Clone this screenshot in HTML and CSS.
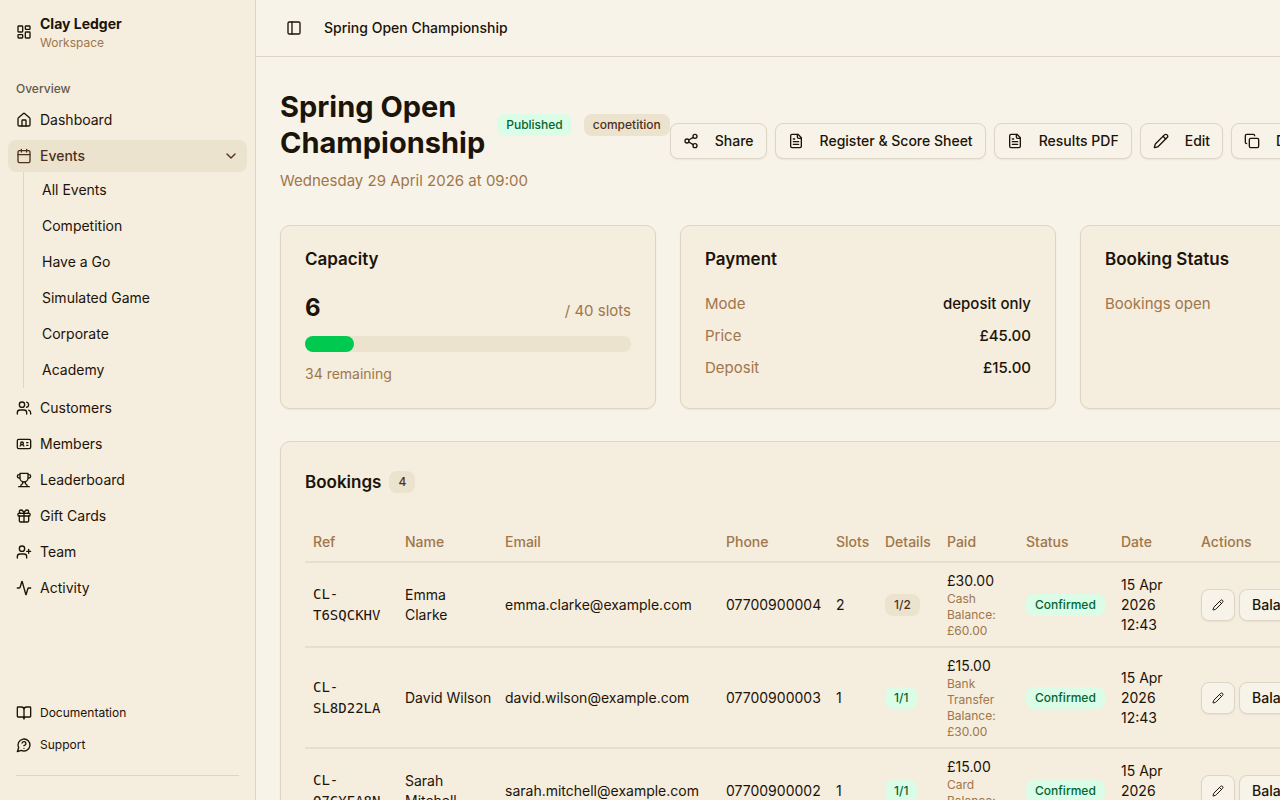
FILE: index.html
```html
<!DOCTYPE html>
<html lang="en">
<head>
<meta charset="utf-8">
<title>Spring Open Championship - Clay Ledger</title>
<meta name="viewport" content="width=device-width, initial-scale=1">
<link rel="stylesheet" href="styles.css">
</head>
<body>
<svg class="sprite" aria-hidden="true">
  <symbol id="i-doc" viewBox="0 0 24 24"><path d="M15 2H6a2 2 0 0 0-2 2v16a2 2 0 0 0 2 2h12a2 2 0 0 0 2-2V7Z"/><path d="M14 2v4a2 2 0 0 0 2 2h4M10 9H8M16 13H8M16 17H8"/></symbol>
  <symbol id="i-pencil" viewBox="0 0 24 24"><path d="M21.174 6.812a1 1 0 0 0-3.986-3.987L3.842 16.174a2 2 0 0 0-.5.83l-1.321 4.352a.5.5 0 0 0 .623.622l4.353-1.32a2 2 0 0 0 .83-.497z"/><path d="m15 5 4 4"/></symbol>
</svg>
<div class="app">
  <aside class="sidebar">
    <a class="brand" href="#">
      <svg class="icon" viewBox="0 0 24 24"><rect width="7" height="9" x="3" y="3" rx="1"/><rect width="7" height="5" x="14" y="3" rx="1"/><rect width="7" height="9" x="14" y="12" rx="1"/><rect width="7" height="5" x="3" y="16" rx="1"/></svg>
      <span class="brand-text"><strong>Clay Ledger</strong><small>Workspace</small></span>
    </a>
    <nav class="nav" aria-label="Overview">
      <p class="nav-label">Overview</p>
      <a class="nav-item" href="#"><svg class="icon" viewBox="0 0 24 24"><path d="M15 21v-8a1 1 0 0 0-1-1h-4a1 1 0 0 0-1 1v8"/><path d="M3 10a2 2 0 0 1 .709-1.528l7-5.999a2 2 0 0 1 2.582 0l7 5.999A2 2 0 0 1 21 10v9a2 2 0 0 1-2 2H5a2 2 0 0 1-2-2z"/></svg>Dashboard</a>
      <div>
        <button class="nav-item active" type="button" aria-expanded="true"><svg class="icon" viewBox="0 0 24 24"><path d="M8 2v4M16 2v4M3 10h18"/><rect width="18" height="18" x="3" y="4" rx="2"/></svg><span class="grow">Events</span><svg class="icon" viewBox="0 0 24 24"><path d="m6 9 6 6 6-6"/></svg></button>
        <div class="subnav">
          <a href="#">All Events</a>
          <a href="#">Competition</a>
          <a href="#">Have a Go</a>
          <a href="#">Simulated Game</a>
          <a href="#">Corporate</a>
          <a href="#">Academy</a>
        </div>
      </div>
      <a class="nav-item" href="#"><svg class="icon" viewBox="0 0 24 24"><path d="M16 21v-2a4 4 0 0 0-4-4H6a4 4 0 0 0-4 4v2"/><circle cx="9" cy="7" r="4"/><path d="M22 21v-2a4 4 0 0 0-3-3.87M16 3.13a4 4 0 0 1 0 7.75"/></svg>Customers</a>
      <a class="nav-item" href="#"><svg class="icon" viewBox="0 0 24 24"><path d="M16 10h2M16 14h2M6.17 15a3 3 0 0 1 5.66 0"/><circle cx="9" cy="11" r="2"/><rect x="2" y="5" width="20" height="14" rx="2"/></svg>Members</a>
      <a class="nav-item" href="#"><svg class="icon" viewBox="0 0 24 24"><path d="M6 9H4.5a2.5 2.5 0 0 1 0-5H6M18 9h1.500a2.500 2.500 0 0 0 0-5H18M4 22h16M10 14.660V17c0 .55-.47.98-.97 1.210C7.850 18.750 7 20.240 7 22M14 14.660V17c0 .55.47.98.97 1.210C16.150 18.750 17 20.240 17 22M18 2H6v7a6 6 0 0 0 12 0V2Z"/></svg>Leaderboard</a>
      <a class="nav-item" href="#"><svg class="icon" viewBox="0 0 24 24"><rect x="3" y="8" width="18" height="4" rx="1"/><path d="M12 8v13M19 12v7a2 2 0 0 1-2 2H7a2 2 0 0 1-2-2v-7M7.500 8a2.500 2.500 0 0 1 0-5A4.800 8 0 0 1 12 8a4.800 8 0 0 1 4.500-5 2.500 2.500 0 0 1 0 5"/></svg>Gift Cards</a>
      <a class="nav-item" href="#"><svg class="icon" viewBox="0 0 24 24"><path d="M16 21v-2a4 4 0 0 0-4-4H6a4 4 0 0 0-4 4v2"/><circle cx="9" cy="7" r="4"/><path d="M19 8v6M22 11h-6"/></svg>Team</a>
      <a class="nav-item" href="#"><svg class="icon" viewBox="0 0 24 24"><path d="M22 12h-2.480a2 2 0 0 0-1.930 1.460l-2.350 8.360a.25.25 0 0 1-.48 0L9.240 2.180a.25.25 0 0 0-.48 0l-2.350 8.360A2 2 0 0 1 4.490 12H2"/></svg>Activity</a>
    </nav>
    <nav class="help" aria-label="Help">
      <a href="#"><svg class="icon" viewBox="0 0 24 24"><path d="M12 7v14M3 18a1 1 0 0 1-1-1V4a1 1 0 0 1 1-1h5a4 4 0 0 1 4 4 4 4 0 0 1 4-4h5a1 1 0 0 1 1 1v13a1 1 0 0 1-1 1h-6a3 3 0 0 0-3 3 3 3 0 0 0-3-3z"/></svg>Documentation</a>
      <a href="#"><svg class="icon" viewBox="0 0 24 24"><path d="M7.900 20A9 9 0 1 0 4 16.100L2 22Z"/><path d="M9.090 9a3 3 0 0 1 5.830 1c0 2-3 3-3 3M12 17h.01"/></svg>Support</a>
    </nav>
    <div class="sidebar-foot"></div>
  </aside>

  <div class="page">
    <header class="topbar">
      <button class="toggle" type="button" aria-label="Toggle sidebar"><svg class="icon" viewBox="0 0 24 24"><rect width="18" height="18" x="3" y="3" rx="2"/><path d="M9 3v18"/></svg></button>
      <span>Spring Open Championship</span>
    </header>
    <main class="main">
      <section class="event-head">
        <div>
          <div class="title-row">
            <h1>Spring Open Championship</h1>
            <span class="badge green">Published</span>
            <span class="badge">competition</span>
          </div>
          <p class="when">Wednesday 29 April 2026 at 09:00</p>
        </div>
        <div class="actions">
          <button class="btn" type="button"><svg class="icon" viewBox="0 0 24 24"><circle cx="18" cy="5" r="3"/><circle cx="6" cy="12" r="3"/><circle cx="18" cy="19" r="3"/><path d="m8.590 13.510 6.830 3.980M15.410 6.510l-6.820 3.980"/></svg>Share</button>
          <button class="btn" type="button"><svg class="icon"><use href="#i-doc"/></svg>Register &amp; Score Sheet</button>
          <button class="btn" type="button"><svg class="icon"><use href="#i-doc"/></svg>Results PDF</button>
          <button class="btn" type="button"><svg class="icon"><use href="#i-pencil"/></svg>Edit</button>
          <button class="btn" type="button"><svg class="icon" viewBox="0 0 24 24"><rect width="14" height="14" x="8" y="8" rx="2"/><path d="M4 16c-1.100 0-2-.9-2-2V4c0-1.100.9-2 2-2h10c1.100 0 2 .9 2 2"/></svg>Duplicate</button>
          <button class="btn" type="button"><svg class="icon" viewBox="0 0 24 24"><path d="M3 6h18M19 6v14a2 2 0 0 1-2 2H7a2 2 0 0 1-2-2V6M8 6V4a2 2 0 0 1 2-2h4a2 2 0 0 1 2 2v2"/></svg>Delete</button>
        </div>
      </section>

      <section class="cards">
        <article class="card">
          <h2>Capacity</h2>
          <div class="capacity">
            <div class="capacity-row"><strong>6</strong><span class="muted">/ 40 slots</span></div>
            <div class="bar"><div class="bar-fill" style="width: 15%"></div></div>
            <p class="remaining">34 remaining</p>
          </div>
        </article>
        <article class="card">
          <h2>Payment</h2>
          <dl class="facts">
            <div><dt>Mode</dt><dd>deposit only</dd></div>
            <div><dt>Price</dt><dd>£45.00</dd></div>
            <div><dt>Deposit</dt><dd>£15.00</dd></div>
          </dl>
        </article>
        <article class="card">
          <h2>Booking Status</h2>
          <p class="muted">Bookings open</p>
        </article>
      </section>

      <section class="card bookings">
        <div class="bookings-head"><h2>Bookings</h2><span class="badge">4</span></div>
        <table>
          <colgroup><col class="c-ref"><col class="c-name"><col class="c-email"><col class="c-phone"><col class="c-slots"><col class="c-details"><col class="c-paid"><col class="c-status"><col class="c-date"><col></colgroup>
          <thead><tr><th>Ref</th><th>Name</th><th>Email</th><th>Phone</th><th>Slots</th><th>Details</th><th>Paid</th><th>Status</th><th>Date</th><th>Actions</th></tr></thead>
          <tbody>
            <tr>
              <td class="ref">CL-<wbr>T6SQCKHV</td><td>Emma Clarke</td><td>emma.clarke@example.com</td><td>07700900004</td><td>2</td><td><span class="badge">1/2</span></td>
              <td>£30.00<small>Cash</small><small>Balance: £60.00</small></td><td><span class="badge green">Confirmed</span></td><td>15 Apr 2026 12:43</td>
              <td><div class="row-actions"><button class="btn small icon-only" type="button" aria-label="Edit booking"><svg class="icon"><use href="#i-pencil"/></svg></button><button class="btn small" type="button">Balance</button></div></td>
            </tr>
            <tr>
              <td class="ref">CL-<wbr>SL8D22LA</td><td class="nowrap">David Wilson</td><td>david.wilson@example.com</td><td>07700900003</td><td>1</td><td><span class="badge green">1/1</span></td>
              <td>£15.00<small>Bank Transfer</small><small>Balance: £30.00</small></td><td><span class="badge green">Confirmed</span></td><td>15 Apr 2026 12:43</td>
              <td><div class="row-actions"><button class="btn small icon-only" type="button" aria-label="Edit booking"><svg class="icon"><use href="#i-pencil"/></svg></button><button class="btn small" type="button">Balance</button></div></td>
            </tr>
            <tr>
              <td class="ref">CL-<wbr>Q7CYEA8N</td><td>Sarah Mitchell</td><td>sarah.mitchell@example.com</td><td>07700900002</td><td>1</td><td><span class="badge green">1/1</span></td>
              <td>£15.00<small>Card</small><small>Balance: £30.00</small></td><td><span class="badge green">Confirmed</span></td><td>15 Apr 2026 12:43</td>
              <td><div class="row-actions"><button class="btn small icon-only" type="button" aria-label="Edit booking"><svg class="icon"><use href="#i-pencil"/></svg></button><button class="btn small" type="button">Balance</button></div></td>
            </tr>
          </tbody>
        </table>
      </section>
    </main>
  </div>
</div>
</body>
</html>
```
FILE: styles.css
```css
:root {
  --bg: #f7f3e8;
  --surface: #f5eddd;
  --accent: #ece3cf;
  --border: #ddd5c5;
  --line: #e7dfce;
  --text: #1c1309;
  --brown: #4f301c;
  --muted: #a0764b;
}

* {
  box-sizing: border-box;
}

body {
  margin: 0;
  overflow: hidden;
  background: var(--bg);
  color: var(--text);
  font-family: Inter, "Liberation Sans", sans-serif;
  font-size: 15px;
  line-height: 24px;
}

h1, h2, p, dl, dd {
  margin: 0;
}

a {
  color: inherit;
  text-decoration: none;
}

button {
  font: inherit;
  color: inherit;
}

.sprite {
  display: none;
}

.icon {
  flex: none;
  width: 16px;
  height: 16px;
  fill: none;
  stroke: currentColor;
  stroke-width: 2;
  stroke-linecap: round;
  stroke-linejoin: round;
}

.app {
  display: flex;
  height: 100vh;
}

.sidebar {
  display: flex;
  flex-direction: column;
  flex: none;
  width: 256px;
  border-right: 1px solid var(--border);
  background: var(--surface);
  font-size: 14px;
  line-height: 20px;
}

.brand {
  display: flex;
  align-items: center;
  gap: 8px;
  height: 64px;
  padding: 0 16px;
}

.brand-text {
  display: flex;
  flex-direction: column;
}

.brand-text strong {
  line-height: 22px;
  font-weight: 700;
}

.brand-text small {
  font-size: 12px;
  line-height: 16px;
  color: var(--muted);
}

.nav {
  display: flex;
  flex: 1;
  flex-direction: column;
  gap: 4px;
  padding: 8px;
}

.nav-label {
  margin-bottom: -4px;
  padding: 8px 8px 6px;
  font-size: 12px;
  line-height: 18px;
  font-weight: 500;
  color: #635a4e;
}

.nav-item {
  display: flex;
  align-items: center;
  gap: 8px;
  width: 100%;
  height: 32px;
  padding: 0 8px;
  border: 0;
  border-radius: 8px;
  background: none;
  text-align: left;
}

.nav-item.active {
  background: var(--accent);
  color: var(--brown);
  font-weight: 500;
}

.grow {
  flex: 1;
}

.subnav {
  display: flex;
  flex-direction: column;
  margin-left: 15px;
  padding-left: 18px;
  border-left: 1px solid var(--border);
}

.subnav a {
  padding: 8px 0;
}

.help {
  display: flex;
  flex-direction: column;
  padding: 0 16px;
  font-size: 12px;
}

.help a {
  display: flex;
  align-items: center;
  gap: 8px;
  height: 32px;
}

.sidebar-foot {
  height: 25px;
  margin: 14px 16px 0;
  border-top: 1px solid var(--border);
}

.page {
  flex: 1;
}

.topbar {
  display: flex;
  align-items: center;
  gap: 16px;
  height: 57px;
  padding: 0 24px;
  border-bottom: 1px solid var(--border);
  font-size: 14px;
  font-weight: 500;
}

.toggle {
  display: flex;
  align-items: center;
  justify-content: center;
  width: 28px;
  height: 28px;
  padding: 0;
  border: 0;
  background: none;
}

.main {
  display: grid;
  gap: 32px;
  padding: 32px 24px;
}

/* The table sets the width of the page; the heading wraps inside it. */
.event-head {
  display: flex;
  align-items: center;
  justify-content: space-between;
  width: 0;
  min-width: 100%;
}

.title-row {
  display: flex;
  align-items: center;
  gap: 12px;
}

h1 {
  font-size: 29px;
  line-height: 36px;
  font-weight: 700;
}

.when {
  margin-top: 8px;
  color: var(--muted);
}

.badge {
  display: inline-block;
  padding: 3px 9px;
  border-radius: 8px;
  background: var(--accent);
  color: var(--brown);
  font-size: 12px;
  line-height: 16px;
  font-weight: 500;
  white-space: nowrap;
}

.badge.green {
  background: #dbfce7;
  color: #016630;
}

.actions {
  display: flex;
  flex: none;
  gap: 8px;
}

.btn {
  display: flex;
  align-items: center;
  gap: 16px;
  height: 36px;
  padding: 0 12px;
  border: 1px solid var(--border);
  border-radius: 8px;
  background: var(--bg);
  box-shadow: 0 1px 2px rgba(0, 0, 0, 0.06);
  font-size: 14px;
  line-height: 20px;
  font-weight: 500;
  white-space: nowrap;
}

.cards {
  display: grid;
  grid-template-columns: repeat(3, 1fr);
  gap: 24px;
}

.card {
  padding: 24px;
  border: 1px solid var(--border);
  border-radius: 10px;
  background: var(--surface);
  box-shadow: 0 1px 2px rgba(0, 0, 0, 0.06);
}

h2 {
  font-size: 17px;
  line-height: 18px;
  font-weight: 600;
}

.cards h2 {
  margin-bottom: 24px;
}

.muted {
  color: var(--muted);
}

.capacity {
  display: grid;
  gap: 12px;
}

.capacity-row {
  display: flex;
  align-items: baseline;
  justify-content: space-between;
  height: 32px;
}

.capacity-row strong {
  font-size: 24px;
  line-height: 32px;
}

.bar {
  height: 16px;
  border-radius: 8px;
  background: var(--accent);
}

.bar-fill {
  height: 100%;
  border-radius: 8px;
  background: #00c950;
}

.remaining {
  font-size: 14px;
  line-height: 20px;
  color: var(--muted);
}

.facts {
  display: grid;
  gap: 8px;
}

.facts div {
  display: flex;
  justify-content: space-between;
}

.facts dt {
  color: var(--muted);
}

.facts dd {
  font-weight: 500;
}

.bookings-head {
  display: flex;
  align-items: center;
  gap: 8px;
  height: 32px;
  margin-bottom: 24px;
}

table {
  width: 100%;
  min-width: 1126px;
  table-layout: fixed;
  border-spacing: 0;
  font-size: 14px;
  line-height: 20px;
}

th, td {
  padding: 8px 8px 7px;
  border-bottom: 2px solid var(--line);
  text-align: left;
  vertical-align: middle;
}

th {
  padding: 10px 8px 9px;
  font-weight: 500;
  color: var(--muted);
}

.c-ref { width: 92px; }
.c-name { width: 100px; }
.c-email { width: 221px; }
.c-phone { width: 110px; }
.c-slots { width: 49px; }
.c-details { width: 62px; }
.c-paid { width: 79px; }
.c-status { width: 95px; }
.c-date { width: 80px; }

.ref {
  font-family: "DejaVu Sans Mono", "Liberation Mono", monospace;
  line-height: 21px;
}

.nowrap {
  white-space: nowrap;
}

td small {
  display: block;
  font-size: 12px;
  line-height: 16px;
  color: var(--muted);
}

.row-actions {
  display: flex;
  gap: 4px;
}

.btn.small {
  height: 32px;
}

.btn.icon-only {
  padding: 0 10px;
}

.btn.small .icon {
  width: 12px;
  height: 12px;
}
```
